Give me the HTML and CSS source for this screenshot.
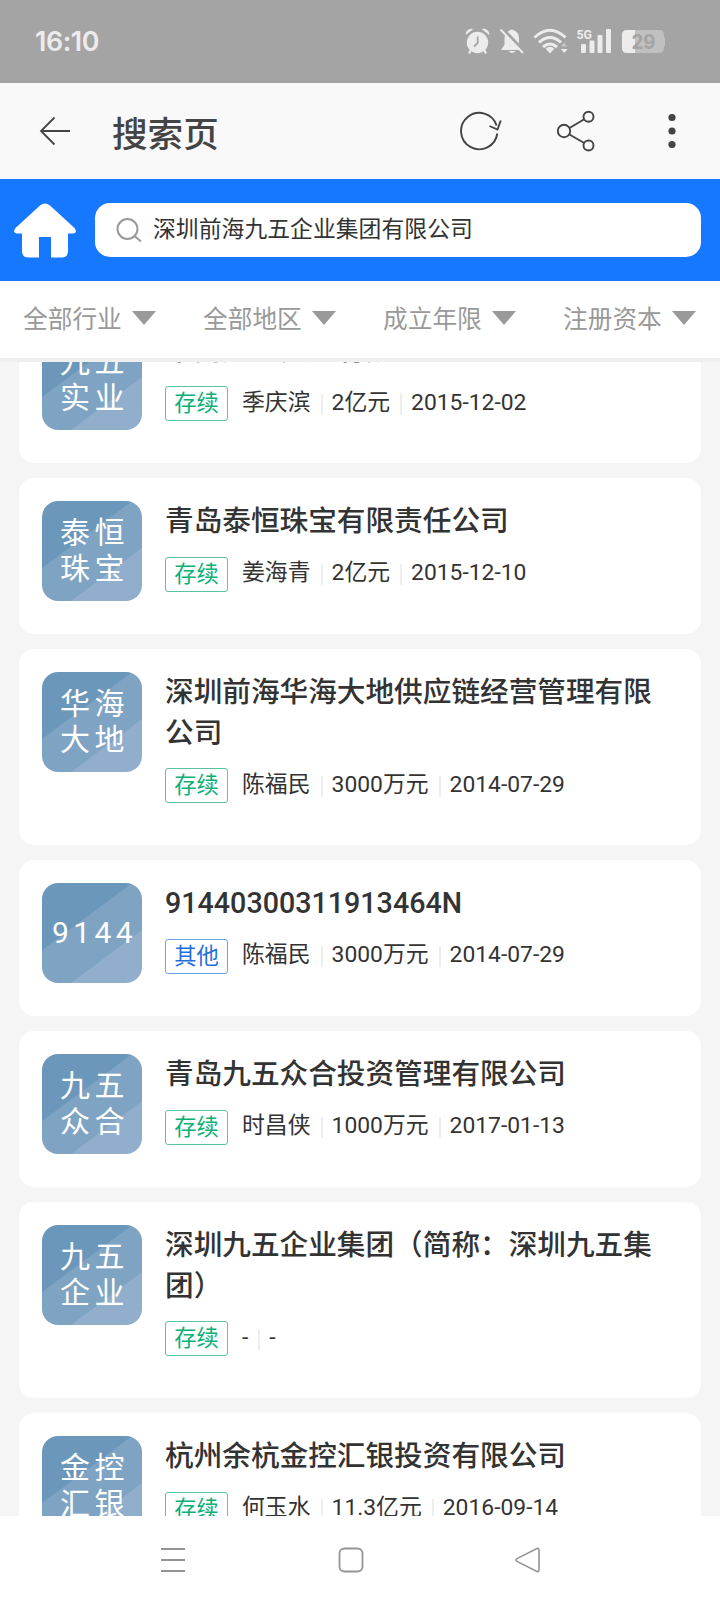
FILE: index.html
```html
<!DOCTYPE html>
<html lang="zh-CN">
<head>
<meta charset="utf-8">
<title>搜索页</title>
<link rel="stylesheet" href="styles.css">
</head>
<body>
<div class="status">
  <span class="clock">16:10</span>
  <svg class="status-icons" width="210" height="40" viewBox="0 0 210 40">
    <g fill="#ececec">
      <circle cx="22.500" cy="22.500" r="10.700"/>
      <path d="M10.800 15a5.600 5.600 0 0 1 7.500-6zM34.200 15a5.600 5.600 0 0 0-7.500-6z"/>
      <path d="M16.500 29l-2.500 4.500M28.500 29l2.500 4.500" stroke="#ececec" stroke-width="2.200"/>
      <path d="M22.700 16.500v6.500l-3.700 3.500" fill="none" stroke="#a4a4a4" stroke-width="1.800"/>
      <path d="M57 9.500c5 1.500 7 4.500 7 9v5l4 6.500H46l3.500-5.500v-6c0-4 2.500-7.500 7.500-9zM53.500 31h7q-3.500 4-7 0z"/>
      <path d="M47.500 8.500l23 24" stroke="#a4a4a4" stroke-width="3"/>
      <path d="M45.500 9.500L68 33" stroke="#ececec" stroke-width="2"/>
      <path d="M95 33.500l-4.300-4.800q4.300-3.700 8.600 0z"/>
    </g>
    <g fill="none" stroke="#ececec" stroke-width="3">
      <path d="M79.500 17.500q15.500-14.500 31 0M84 22.500q11-10 22 0M88 27q7-6 14 0"/>
    </g>
    <path d="M106 26.500l3-4 3 4z" fill="#c6c6c6"/>
    <g fill="#ececec">
      <path d="M106 29h6.500l-3.200 4z"/>
      <rect x="126" y="24" width="5" height="9" rx="1"/>
      <rect x="134.500" y="20.500" width="5" height="12.500" rx="1"/>
      <rect x="142.500" y="15" width="5" height="18" rx="1"/>
      <rect x="151" y="9" width="5" height="24" rx="1"/>
    </g>
    <text class="net" x="121.500" y="18.700" textLength="15.500" lengthAdjust="spacingAndGlyphs">5G</text>
    <path d="M172 10h32q5 0 5 5v2q2 0 2 2v5q0 2-2 2v2q0 5-5 5h-32q-5 0-5-5v-13q0-5 5-5z" fill="#c0c0c0"/>
    <path d="M172 10h8v23h-8q-5 0-5-5v-13q0-5 5-5z" fill="#ececec"/>
    <text class="battery" x="176.500" y="29" textLength="24" lengthAdjust="spacingAndGlyphs">29</text>
  </svg>
</div>

<header class="titlebar">
  <svg class="back" width="32" height="30" viewBox="0 0 32 30"><path d="M31 15H2M15.500 1.500L2 15l13.500 13.500" fill="none" stroke="#444" stroke-width="1.800"/></svg>
  <h1 class="page-title">搜索页</h1>
  <svg class="actions" width="220" height="44" viewBox="0 0 220 44">
    <g fill="none" stroke="#444" stroke-width="1.900">
      <path d="M37.300 24.500a18.200 18.200 0 1 1-.7-8M29.500 17l8 3.500 3.300-9"/>
      <circle cx="104" cy="22" r="6.200"/><circle cx="128.500" cy="7.700" r="5"/><circle cx="128.500" cy="36.500" r="5"/>
      <path d="M109.500 19l14.700-8.700M109.500 25.500l14.700 8.500"/>
    </g>
    <g fill="#444"><circle cx="212" cy="8.500" r="3.600"/><circle cx="212" cy="22" r="3.600"/><circle cx="212" cy="35.500" r="3.600"/></g>
  </svg>
</header>

<div class="search">
  <svg class="home" width="62" height="55" viewBox="0 0 62 55"><path d="M26 2.500q5-4 10 0L60.500 25q3.500 5-2 5.500H54V48q0 6.500-6.500 6.500H37V34H25v20.500H14.500Q8 54.500 8 48V30.500H3.500q-5.500-.5-2-5.500z" fill="#fff"/></svg>
  <div class="search-box">
    <svg width="26" height="25" viewBox="0 0 26 25"><g fill="none" stroke="#999" stroke-width="2"><circle cx="11.500" cy="11" r="10"/><path d="M18.500 18l6.500 5.500"/></g></svg>
    <span>深圳前海九五企业集团有限公司</span>
  </div>
</div>

<nav class="filters">
  <div class="filter">全部行业<i class="caret"></i></div>
  <div class="filter">全部地区<i class="caret"></i></div>
  <div class="filter">成立年限<i class="caret"></i></div>
  <div class="filter">注册资本<i class="caret"></i></div>
</nav>

<main class="list">
  <article class="card">
    <div class="logo"><span>九五<br>实业</span></div>
    <div class="info">
      <h2 class="name">中南九五实业有限公司</h2>
      <div class="meta"><b class="tag">存续</b><span>季庆滨</span><span>2亿元</span><span>2015-12-02</span></div>
    </div>
  </article>
  <article class="card">
    <div class="logo"><span>泰恒<br>珠宝</span></div>
    <div class="info">
      <h2 class="name">青岛泰恒珠宝有限责任公司</h2>
      <div class="meta"><b class="tag">存续</b><span>姜海青</span><span>2亿元</span><span>2015-12-10</span></div>
    </div>
  </article>
  <article class="card">
    <div class="logo"><span>华海<br>大地</span></div>
    <div class="info">
      <h2 class="name">深圳前海华海大地供应链经营管理有限公司</h2>
      <div class="meta"><b class="tag">存续</b><span>陈福民</span><span>3000万元</span><span>2014-07-29</span></div>
    </div>
  </article>
  <article class="card">
    <div class="logo"><span>9144</span></div>
    <div class="info">
      <h2 class="name">91440300311913464N</h2>
      <div class="meta"><b class="tag tag-other">其他</b><span>陈福民</span><span>3000万元</span><span>2014-07-29</span></div>
    </div>
  </article>
  <article class="card">
    <div class="logo"><span>九五<br>众合</span></div>
    <div class="info">
      <h2 class="name">青岛九五众合投资管理有限公司</h2>
      <div class="meta"><b class="tag">存续</b><span>时昌侠</span><span>1000万元</span><span>2017-01-13</span></div>
    </div>
  </article>
  <article class="card">
    <div class="logo"><span>九五<br>企业</span></div>
    <div class="info">
      <h2 class="name">深圳九五企业集团（简称：深圳九五集团）</h2>
      <div class="meta"><b class="tag">存续</b><span>-</span><span>-</span></div>
    </div>
  </article>
  <article class="card">
    <div class="logo"><span>金控<br>汇银</span></div>
    <div class="info">
      <h2 class="name">杭州余杭金控汇银投资有限公司</h2>
      <div class="meta"><b class="tag">存续</b><span>何玉水</span><span>11.3亿元</span><span>2016-09-14</span></div>
    </div>
  </article>
</main>

<footer class="sysnav">
  <svg width="26" height="26" viewBox="0 0 26 26"><path d="M1 2h24M1 13h24M1 24h24" stroke="#949494" stroke-width="1.800"/></svg>
  <svg width="26" height="26" viewBox="0 0 26 26"><rect x="1.500" y="1.500" width="23" height="23" rx="5" fill="none" stroke="#949494" stroke-width="1.800"/></svg>
  <svg width="26" height="26" viewBox="0 0 26 26"><path d="M2 11.600L22 1.600q2-.8 2 1.400v20q0 2.200-2 1.400L2 14.400q-2-1.400 0-2.800z" fill="none" stroke="#949494" stroke-width="1.600"/></svg>
</footer>
</body>
</html>
```
FILE: styles.css
```css
* { box-sizing: border-box; }

body {
  margin: 0;
  height: 1604px;
  display: flex;
  flex-direction: column;
  overflow: hidden;
  background: #f5f5f5;
  color: #333;
  font-family: Roboto, "Noto Sans CJK SC", sans-serif;
}

svg { flex: none; display: block; }

.status {
  flex: none;
  height: 83px;
  padding: 0 47px 0 35px;
  display: flex;
  align-items: center;
  justify-content: space-between;
  background: #a4a4a4;
}
.clock { font: 600 26.800px/1 Inter, sans-serif; color: #ececec; letter-spacing: -.4px; }
.status-icons { margin: 0 8px 3px 0; }
.net { font: 700 13.500px Roboto, sans-serif; fill: #ececec; }
.battery { font: 700 20px Inter, sans-serif; fill: #a4a4a4; }

.titlebar {
  flex: none;
  height: 96px;
  padding: 0 40px 0 39px;
  display: flex;
  align-items: center;
  background: #f9f9f9;
}
.page-title { margin: 7px 0 0 41px; font-size: 35.600px; line-height: 48px; font-weight: 500; color: #444; }
.actions { margin-left: auto; }

.search {
  flex: none;
  height: 102px;
  padding: 0 19px 0 14px;
  display: flex;
  align-items: center;
  gap: 19px;
  background: #1677ff;
}
.search-box {
  flex: 1;
  height: 54px;
  padding-left: 21px;
  display: flex;
  align-items: center;
  gap: 11px;
  border-radius: 15px;
  background: #fff;
  font-size: 22.850px;
  line-height: 32px;
}

.filters {
  flex: none;
  height: 81px;
  display: grid;
  grid-template-columns: repeat(4, 180px);
  border-bottom: 4px solid #efefef;
  background: #fff;
}
.filter { display: flex; align-items: center; gap: 10.500px; padding-left: 23px; padding-bottom: 6px; font-size: 24.700px; color: #999; }
.caret { margin-top: 3px; border: solid transparent; border-width: 14px 12px 0; border-top-color: #999; }

.list { flex: 1; min-height: 0; overflow: hidden; padding: 0 19px; }
.card {
  display: flex;
  gap: 23px;
  min-height: 155.400px;
  margin-bottom: 15.400px;
  padding: 23px 23px 41.600px;
  border-radius: 15px;
  background: #fff;
}
.card:first-child { margin-top: -54.600px; }
.logo {
  flex: none;
  width: 100px;
  height: 100px;
  margin-bottom: -20px;
  display: flex;
  align-items: center;
  justify-content: center;
  border-radius: 16px;
  background: linear-gradient(143.300deg, #6b97bb 0 38.300%, #7fa3c3 38.700% 69.500%, #91afcc 69.900%);
  color: #fff;
  font-size: 30px;
  line-height: 36px;
  letter-spacing: 4.400px;
}
.logo span { padding-left: 5px; }
.info { flex: 1; min-width: 0; }
.name { margin: 0; font-size: 28.650px; line-height: 40.800px; font-weight: 500; }
.meta { display: flex; align-items: center; margin-top: 14.800px; height: 35px; font-size: 22.850px; line-height: 34px; }
.meta span { position: relative; top: -1px; }
.meta .tag + span { margin-left: 14px; }
.meta span + span { margin-left: 21px; }
.meta span + span::before { content: ""; position: absolute; left: -11px; top: 8px; width: 2px; height: 21px; background: #eee; }
.tag {
  width: 63px;
  height: 35px;
  border: 1px solid #5cc3a0;
  border-radius: 3px;
  color: #0aaf76;
  font-size: 22.300px;
  line-height: 32px;
  font-weight: 400;
  text-align: center;
}
.tag-other { border-color: #6da3de; color: #1f6fdf; }

.sysnav {
  flex: none;
  height: 88px;
  padding: 0 179px 0 160px;
  display: flex;
  align-items: center;
  justify-content: space-between;
  background: #fff;
}
```
